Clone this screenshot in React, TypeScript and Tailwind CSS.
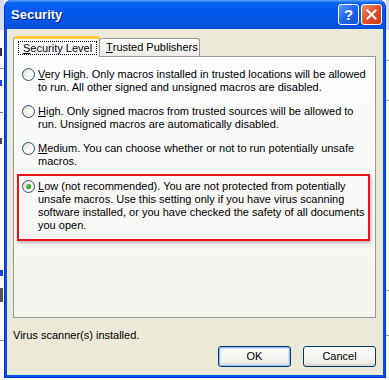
import React from "react";

const font = { fontFamily: '"Liberation Sans", Arial, sans-serif' };

function Radio({ checked }: { checked?: boolean }) {
  return (
    <div className="w-[13px] h-[13px] shrink-0 rounded-full border border-[#1c5180] bg-[linear-gradient(135deg,#dcd9ce_0%,#f4f3ee_45%,#ffffff_100%)] flex items-center justify-center">
      {checked && (
        <div className="w-[5px] h-[5px] rounded-full bg-[radial-gradient(circle_at_35%_35%,#55d655,#21a121_60%,#1a8a1a)]" />
      )}
    </div>
  );
}

function Item({
  checked,
  accel,
  rest,
  lines,
}: {
  checked?: boolean;
  accel: string;
  rest: string;
  lines: string[];
}) {
  return (
    <div className="flex gap-[3px] items-start">
      <div className="pt-0">
        <Radio checked={checked} />
      </div>
      <div className="text-[11px] leading-[13px] text-black">
        <div className="whitespace-nowrap">
          <span className="underline underline-offset-[1px]">{accel}</span>
          {rest}
        </div>
        {lines.map((l, i) => (
          <div key={i} className="whitespace-nowrap">
            {l}
          </div>
        ))}
      </div>
    </div>
  );
}

export default function App() {
  return (
    <div className="w-[389px] h-[380px] bg-[#f8f8f8] overflow-hidden relative" style={font}>
      {/* background fragments of other window */}
      <div className="absolute left-0 top-0 w-[4px] h-[380px] bg-white">
        <div className="absolute left-0 top-0 w-[4px] h-[30px] bg-[#d4dcec]" />
        <div className="absolute left-0 top-[48px] w-[2px] h-[8px] bg-[#333]" />
        <div className="absolute left-0 top-[68px] w-[4px] h-[1px] bg-[#888]" />
        <div className="absolute left-0 top-[80px] w-[2px] h-[6px] bg-[#2040d0]" />
        <div className="absolute left-0 top-[112px] w-[3px] h-[1px] bg-[#777]" />
        <div className="absolute left-0 top-[138px] w-[2px] h-[6px] bg-[#444]" />
        <div className="absolute left-0 top-[270px] w-[3px] h-[6px] bg-[#2040d0]" />
        <div className="absolute left-0 top-[288px] w-[3px] h-[14px] bg-[#555]" />
        <div className="absolute left-0 top-[340px] w-[4px] h-[1px] bg-[#888]" />
      </div>
      <div className="absolute right-0 top-0 w-[3px] h-[380px] bg-white">
        <div className="absolute left-0 top-0 w-[3px] h-[30px] bg-[#d4dcec]" />
        <div className="absolute left-0 top-[60px] w-[3px] h-[1px] bg-[#999]" />
        <div className="absolute left-0 top-[100px] w-[3px] h-[1px] bg-[#999]" />
        <div className="absolute left-0 top-[290px] w-[3px] h-[1px] bg-[#999]" />
        <div className="absolute left-0 top-[335px] w-[3px] h-[1px] bg-[#999]" />
      </div>

      {/* Window */}
      <div className="ml-[4px] w-[382px] h-[378px] flex flex-col rounded-t-[7px] bg-[#0553e3] border-x border-b border-[#0831d9] overflow-hidden">
        {/* Title bar */}
        <div className="h-[29px] shrink-0 flex items-center pl-[6px] pr-[3px] bg-[linear-gradient(to_bottom,#5aa3ff_0%,#0a64f2_10%,#0058ee_35%,#0557e8_70%,#0450d6_100%)]">
          <div
            className="text-white font-bold text-[13px] flex-1 [text-shadow:1px_1px_0_#0a1f8f]"
            style={font}
          >
            Security
          </div>
          <div className="flex gap-[2px] items-center">
            <div className="w-[21px] h-[21px] rounded-[3px] border border-white bg-[linear-gradient(135deg,#5b9bff_0%,#1e66f0_50%,#1450d8_100%)] flex items-center justify-center text-white font-bold text-[15px] leading-none">
              ?
            </div>
            <div className="w-[21px] h-[21px] rounded-[3px] border border-white bg-[linear-gradient(135deg,#f09070_0%,#e0502a_50%,#c63a14_100%)] flex items-center justify-center">
              <svg width="11" height="11" viewBox="0 0 11 11">
                <path d="M1.5 1.5 L9.5 9.5 M9.5 1.5 L1.5 9.5" stroke="white" strokeWidth="2" strokeLinecap="square" />
              </svg>
            </div>
          </div>
        </div>

        {/* Body */}
        <div className="flex-1 mx-[2px] mb-[2px] bg-[#ece9d8] flex flex-col pl-[6px] pr-[7px] pt-[7px]">
          {/* Tabs */}
          <div className="flex items-end h-[20px] relative z-10">
            <div className="w-[87px] h-[21px] -mb-[1px] bg-[#fcfcfe] border-x border-[#919b9c] rounded-t-[3px] border-t-[3px] border-t-[#ffc83c] flex items-center pl-[4px] text-[11px] text-black">
              <div className="border border-dotted border-black px-[4px] leading-[12px] h-[14px] flex items-center">
                <span className="underline">S</span>ecurity Level
              </div>
            </div>
            <div className="w-[100px] h-[18px] border-t border-r border-[#919b9c] rounded-t-[3px] bg-[linear-gradient(to_bottom,#ffffff,#ecebe6)] flex items-center pl-[6px] text-[11px] text-black">
              <span className="underline">T</span>rusted Publishers
            </div>
          </div>

          {/* Panel */}
          <div className="h-[262px] border border-[#919b9c] bg-[linear-gradient(to_bottom,#fcfcfe,#f4f3ee)] pl-[8px] pt-[11px] flex flex-col gap-[11px]">
            <Item
              accel="V"
              rest="ery High. Only macros installed in trusted locations will be allowed"
              lines={["to run. All other signed and unsigned macros are disabled."]}
            />
            <Item
              accel="H"
              rest="igh. Only signed macros from trusted sources will be allowed to"
              lines={["run. Unsigned macros are automatically disabled."]}
            />
            <Item
              accel="M"
              rest="edium. You can choose whether or not to run potentially unsafe"
              lines={["macros."]}
            />
            <div className="-ml-[5px] -mt-[5px] w-[353px] border-2 border-[#e8131b] pl-[3px] pt-[4px] pb-[7px] shadow-[1px_2px_3px_rgba(0,0,0,0.25)]">
              <Item
                checked
                accel="L"
                rest="ow (not recommended). You are not protected from potentially"
                lines={[
                  "unsafe macros. Use this setting only if you have virus scanning",
                  "software installed, or you have checked the safety of all documents",
                  "you open.",
                ]}
              />
            </div>
          </div>

          {/* Status */}
          <div className="text-[11px] leading-[13px] text-black mt-[11px]">Virus scanner(s) installed.</div>

          {/* Buttons */}
          <div className="flex justify-end gap-[12px] mt-[4px] pr-[-1px]">
            <button className="w-[73px] h-[21px] rounded-[3px] border border-[#003c74] bg-[linear-gradient(to_bottom,#ffffff,#f0f0ea_80%,#d6d0c5)] text-[11px] text-black shadow-[inset_0_0_0_1px_#9eb8f0,inset_0_0_0_2px_#cee7ff]">
              OK
            </button>
            <button className="w-[73px] h-[21px] rounded-[3px] border border-[#003c74] bg-[linear-gradient(to_bottom,#ffffff,#f0f0ea_80%,#d6d0c5)] text-[11px] text-black">
              Cancel
            </button>
          </div>
        </div>
      </div>
    </div>
  );
}
